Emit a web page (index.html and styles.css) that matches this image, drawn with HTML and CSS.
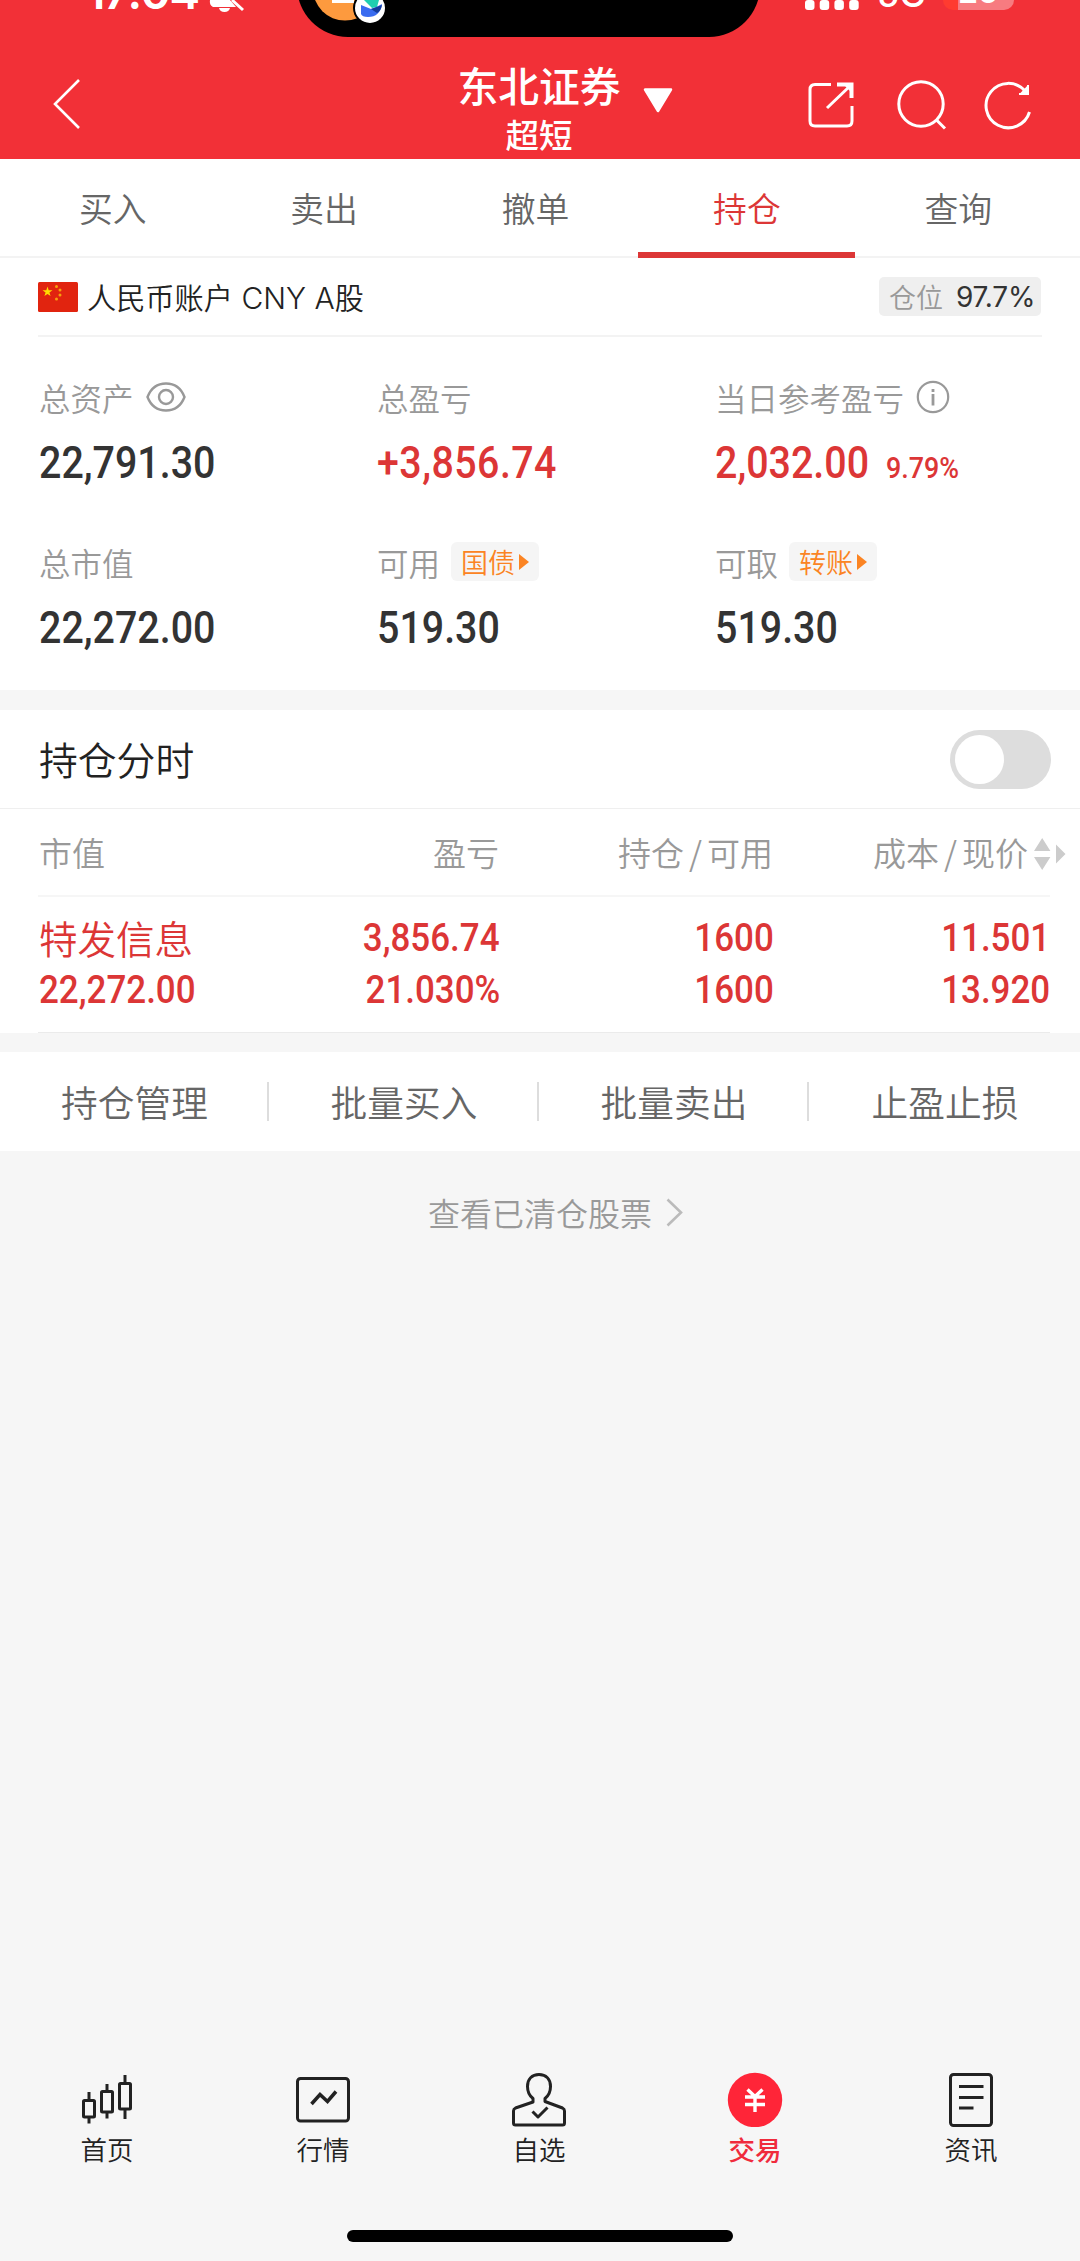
FILE: index.html
```html
<!DOCTYPE html>
<html lang="zh-CN">
<head>
<meta charset="utf-8">
<title>持仓</title>
<link rel="stylesheet" href="styles.css">
</head>
<body>
<div class="app">
  <header class="header">
    <div class="statusbar">
      <span class="clock">17:04</span>
      <svg class="bell" width="38" height="14" viewBox="0 0 38 14"><path d="M1 0H21L27 7H4Q0 5 1 0ZM10 8H21Q20 12 15.500 12T10 8Z" fill="#fff"/><path d="M23 0L34 10" stroke="#fff" stroke-width="3"/></svg>
      <div class="island"></div>
      <svg class="island-art" width="90" height="30" viewBox="0 0 90 30"><circle cx="40" cy="-11.400" r="32" fill="#fd9a3e"/><rect x="27" y="-6" width="22" height="9" fill="#fff"/><circle cx="65" cy="8" r="17" fill="#000"/><circle cx="65" cy="8" r="15" fill="#fff"/><path d="M59 0H74L72 7L67 8Z" fill="#1fcfb0"/><path d="M56 5L66 9Q72 7 77 4Q75 17 63 17Q57 17 56 14Z" fill="#3a6cf0"/><path d="M66 9Q72 7 77 5Q76 11 72 13Z" fill="#143c9c"/></svg>
      <svg class="signal" width="56" height="12" viewBox="0 0 56 12" fill="#fff"><rect y="0" width="9.500" height="10" rx="3"/><rect x="14.700" y="0" width="9.500" height="10" rx="3"/><rect x="29.400" y="0" width="9.500" height="10" rx="3"/><rect x="44.200" y="0" width="9.500" height="10" rx="3"/></svg>
      <span class="network">5G</span>
      <div class="battery"><span class="level">20</span></div>
    </div>
    <svg class="back" width="30" height="52" viewBox="0 0 30 52" fill="none" stroke="#fff" stroke-width="2.600"><path d="M27 2L3 26L27 50"/></svg>
    <div class="title"><span class="broker">东北证券</span><span class="alias">超短</span></div>
    <svg class="caret" width="30" height="25" viewBox="0 0 30 25"><path d="M2 1.500H28L15 23Z" fill="#fff" stroke="#fff" stroke-width="2.500" stroke-linejoin="round"/></svg>
    <div class="tools">
      <svg width="46" height="48" viewBox="0 0 46 48" fill="none" stroke="#fff" stroke-width="3"><path d="M23 3.500H7Q2 3.500 2 8.500V40Q2 45 7 45H39Q44 45 44 40V25M19 27L42 5"/><path d="M29 3.500H43.500V17" stroke-width="4"/><path d="M36 4H44V12Z" fill="#fff" stroke="none"/></svg>
      <svg width="50" height="50" viewBox="0 0 50 50" fill="none" stroke="#fff" stroke-width="3"><circle cx="24" cy="24" r="22.200"/><path d="M39.500 40L48 48.500"/></svg>
      <svg width="48" height="50" viewBox="0 0 48 50" fill="none" stroke="#fff" stroke-width="3"><path d="M41 11A22.200 22.200 0 1 0 45.500 32"/><path d="M44 5V14.500H35Z" fill="#fff" stroke="none"/><path d="M44 5V14H35" stroke-width="2"/></svg>
    </div>
  </header>

  <nav class="tabs">
    <span class="tab">买入</span><span class="tab">卖出</span><span class="tab">撤单</span><span class="tab current">持仓</span><span class="tab">查询</span>
  </nav>

  <section class="account">
    <div class="account-head">
      <svg class="flag" width="40" height="30" viewBox="0 0 40 30"><rect width="40" height="30" rx="1.500" fill="#e1240f"/><path d="M9.500 4.500L10.700 8.200H14.500L11.400 10.500L12.600 14.100L9.500 11.900L6.400 14.100L7.600 10.500L4.500 8.200H8.300Z" fill="#ffde00"/><g fill="#f7a10c"><circle cx="18.500" cy="4.500" r="1.500"/><circle cx="22" cy="8" r="1.500"/><circle cx="22" cy="13" r="1.500"/><circle cx="18.500" cy="17" r="1.500"/></g></svg>
      <span class="account-name">人民币账户 <span class="latin">CNY A</span>股</span>
      <span class="position">仓位<b>97.7%</b></span>
    </div>
    <div class="stats">
      <div class="stat">
        <div class="label">总资产<svg class="eye" width="40" height="30" viewBox="0 0 40 30" fill="none" stroke="#999" stroke-width="2.400"><path d="M1.500 15C5 6 12 1.500 20 1.500S35 6 38.500 15C35 24 28 28.500 20 28.500S5 24 1.500 15Z"/><circle cx="20" cy="15" r="7"/></svg></div>
        <div class="value"><span class="num">22,791.30</span></div>
      </div>
      <div class="stat">
        <div class="label">总盈亏</div>
        <div class="value up"><span class="num signed">+3,856.74</span></div>
      </div>
      <div class="stat">
        <div class="label">当日参考盈亏<svg class="info" width="34" height="34" viewBox="0 0 34 34" fill="none" stroke="#999" stroke-width="2.200"><circle cx="17" cy="17" r="15.200"/><path d="M17 14V25.500M17 9V12" stroke-width="2.800"/></svg></div>
        <div class="value up"><span class="num">2,032.00</span><span class="num rate">9.79%</span></div>
      </div>
      <div class="stat">
        <div class="label">总市值</div>
        <div class="value"><span class="num">22,272.00</span></div>
      </div>
      <div class="stat">
        <div class="label">可用<span class="chip">国债<i></i></span></div>
        <div class="value"><span class="num">519.30</span></div>
      </div>
      <div class="stat">
        <div class="label">可取<span class="chip">转账<i></i></span></div>
        <div class="value"><span class="num">519.30</span></div>
      </div>
    </div>
  </section>

  <section class="holdings">
    <div class="holdings-head"><h2>持仓分时</h2><span class="switch"></span></div>
    <div class="row columns">
      <span>市值</span><span>盈亏</span><span>持仓<em>/</em>可用</span>
      <span class="last">成本<em>/</em>现价</span>
      <svg class="sort" width="32" height="32" viewBox="0 0 32 32" fill="#ccc"><path d="M0 13L8.200 0L16.400 13ZM0 19L8.200 32L16.400 19ZM22 6.500L31.500 16L22 25.500Z"/></svg>
    </div>
    <div class="row position-row">
      <div><span class="stock">特发信息</span><span class="num">22,272.00</span></div>
      <div><span class="num">3,856.74</span><span class="num">21.030%</span></div>
      <div><span class="num">1600</span><span class="num">1600</span></div>
      <div><span class="num">11.501</span><span class="num">13.920</span></div>
    </div>
  </section>

  <section class="actions"><span>持仓管理</span><span>批量买入</span><span>批量卖出</span><span>止盈止损</span></section>

  <div class="cleared">查看已清仓股票<svg width="17" height="29" viewBox="0 0 17 29" fill="none" stroke="#bbb" stroke-width="2.600"><path d="M1.500 1.500L15 14.500L1.500 27.500"/></svg></div>

  <nav class="tabbar">
    <a class="item"><svg width="56" height="56" viewBox="0 0 56 56" fill="none" stroke="#222" stroke-width="3"><rect x="4.500" y="29.500" width="11" height="16.500" rx="1"/><path d="M10 21V29.500M10 46V52.500"/><rect x="22.500" y="20.500" width="11" height="20.500" rx="1"/><path d="M28 13V20.500M28 41V47.500"/><rect x="40.500" y="12.500" width="11" height="25.500" rx="1"/><path d="M46 4V12.500M46 38V48"/></svg>首页</a>
    <a class="item"><svg width="56" height="56" viewBox="0 0 56 56" fill="none" stroke="#222" stroke-width="3"><rect x="2.500" y="7.500" width="51" height="42.500" rx="3"/><path d="M16.500 33L25 23.500L32.500 30.500L41 20.500" stroke-width="3.500"/></svg>行情</a>
    <a class="item"><svg width="56" height="56" viewBox="0 0 56 56" fill="none" stroke="#222" stroke-width="3" stroke-linejoin="round"><path d="M22 31V27.500C17.500 24 16.500 20 16.500 15.500C16.500 8 21 3.500 28 3.500S39.500 8 39.500 15.500C39.500 20 38.500 24 34 27.500V30.500L51.500 37Q53.500 38 53.500 40V52Q53.500 54 51.500 54H4.500Q2.500 54 2.500 52V40Q2.500 38 4.500 37Z"/><path d="M21.500 40.500L27 46L36.500 36.500" stroke-width="3"/></svg>自选</a>
    <a class="item active"><svg width="56" height="56" viewBox="0 0 56 56"><circle cx="28" cy="29" r="27.200" fill="#ff2538"/><path d="M20.500 18.500L28 25.500L35.500 18.500M18 26H38M18 33.500H38M28 25V41" fill="none" stroke="#fff" stroke-width="3.400"/></svg>交易</a>
    <a class="item"><svg width="56" height="56" viewBox="0 0 56 56" fill="none" stroke="#222" stroke-width="3"><rect x="7.500" y="3.500" width="41" height="51" rx="3"/><path d="M16 15.500H40.500M16 26.500H40.500M16 37H30.500"/></svg>资讯</a>
  </nav>
  <div class="home-indicator"></div>
</div>
</body>
</html>
```
FILE: styles.css
```css
* { box-sizing: border-box; }

body {
  margin: 0;
  background: #f6f6f6;
  color: #222;
  font-family: "Noto Sans CJK SC", sans-serif;
  font-weight: 350;
}

svg { display: block; flex: none; }

.app {
  width: 1080px;
  height: 2261px;
  display: flex;
  flex-direction: column;
  overflow: hidden;
}

/* Header */
.header {
  position: relative;
  flex: none;
  height: 159px;
  padding: 62px 48px 0 52px;
  display: flex;
  justify-content: space-between;
  background: #f23037;
  color: #fff;
  overflow: hidden;
}

.statusbar {
  position: absolute;
  inset: 0 0 auto 0;
  height: 40px;
  font: 600 46px/46px Inter, sans-serif;
}

.statusbar > * { position: absolute; top: 0; }
.clock { left: 86px; top: -31px; letter-spacing: -1.500px; }
.bell { left: 209px; }
.island { left: 297px; top: -65px; width: 463px; height: 102px; border-radius: 51px; background: #000; }
.island-art { left: 305px; }
.signal { left: 805px; }
.network { left: 877px; top: -26px; font-weight: 500; font-size: 36px; line-height: 40px; }

.statusbar .battery {
  left: 943px;
  top: -22px;
  width: 71px;
  height: 32px;
  border-radius: 10px;
  background: linear-gradient(90deg, #ff3b30 15px, #f77b80 15px);
}

.level { display: block; margin-top: -4px; text-align: center; font-size: 31px; line-height: 36px; font-weight: 700; }

.back { margin-top: 16px; }

.title {
  position: absolute;
  left: 0;
  right: 2px;
  top: 58px;
  display: flex;
  flex-direction: column;
  align-items: center;
  font-weight: 500;
}

.broker { font-size: 40.800px; line-height: 54px; }
.alias { font-size: 33.500px; line-height: 44px; }
.caret { position: absolute; left: 643px; top: 88px; }
.tools { display: flex; align-items: center; gap: 40px; height: 86px; }
.tools svg:nth-child(2) { margin-left: 3px; }
.tools svg:nth-child(3) { margin-left: -3px; }

/* Order tabs */
.tabs {
  flex: none;
  height: 99px;
  padding: 0 16px 0 7px;
  display: grid;
  grid-template-columns: repeat(5, 1fr);
  border-bottom: 2px solid #f3f3f3;
  background: #fff;
  color: #666;
  font-size: 33.800px;
}

.tab { position: relative; text-align: center; line-height: 97px; }
.current { color: #dc3636; }

.current::after {
  content: "";
  position: absolute;
  left: -3px;
  right: -2px;
  bottom: -2px;
  height: 6px;
  background: #dc3636;
}

/* Account summary */
.account { flex: none; height: 432px; padding: 0 38px; background: #fff; }

.account-head {
  height: 79px;
  display: flex;
  align-items: center;
  border-bottom: 2px solid #f3f3f3;
}

.account-name { margin-left: 9px; font-size: 29.200px; line-height: 44px; }
.latin { margin-left: 2px; font-family: Inter, sans-serif; font-weight: 350; font-size: 30px; }

.position {
  margin-left: auto;
  width: 162px;
  height: 39px;
  margin-right: 1px;
  padding-left: 10px;
  display: flex;
  align-items: center;
  border-radius: 5px;
  background: #efefef;
  color: #999;
  font-size: 27px;
}

.position b { margin-left: 13px; color: #333; font: 400 28px/36px Inter, sans-serif; letter-spacing: -.2px; }

.stats { display: grid; grid-template-columns: repeat(3, 338px); grid-auto-rows: 164.500px; padding: 36px 0 0 1px; }
.label { display: flex; align-items: center; height: 48px; color: #999; font-size: 31.500px; }
.eye { margin-left: 12px; }
.info { margin-left: 12px; }

.value { display: flex; align-items: baseline; height: 60px; margin-top: 12px; color: #333; font-size: 44px; line-height: 60px; }
.up, .position-row { color: #dc3636; }

/* Condensed figures, narrowed toward their anchored edge */
.num {
  display: inline-block;
  font-family: Roboto, sans-serif;
  font-weight: 500;
  transform: scaleX(.895);
  transform-origin: left;
}

.signed { letter-spacing: .5px; }
.rate { margin-left: -1px; font-size: 30px; font-weight: 500; }

.chip {
  display: flex;
  align-items: center;
  width: 88px;
  height: 39px;
  margin-left: 11px;
  padding-left: 10px;
  border-radius: 6px;
  background: #f5f5f5;
  color: #fb8423;
  font-size: 27px;
}

.chip i { margin-left: 4px; border: 8px solid transparent; border-left: 10px solid #fb8423; border-right: 0; }

/* Holdings */
.holdings { flex: none; height: 323px; margin-top: 20px; background: #fff; }

.holdings-head {
  display: flex;
  justify-content: space-between;
  align-items: center;
  height: 99px;
  padding: 0 29px 0 39px;
  border-bottom: 1px solid #efefef;
}

h2 { margin: -3px 0 0; font-size: 38.800px; font-weight: 350; }

.switch { width: 101px; height: 59px; padding: 5px; border-radius: 30px; background: #ddd; }
.switch::before { content: ""; display: block; width: 49px; height: 49px; border-radius: 50%; background: #fff; }

.row {
  position: relative;
  display: grid;
  grid-template-columns: 200px 262px 274px 276px;
  margin: 0 30px 0 38px;
}

.row > * + * { text-align: right; }

.columns { height: 88px; align-items: center; border-bottom: 2px solid #f6f6f6; color: #999; font-size: 33px; line-height: 48px; }
.columns span { padding: 0 1px; }
.columns .last { padding-right: 22px; }
.columns em { margin: 0 5px; font-style: normal; }
.sort { position: absolute; left: 996px; top: 29px; }

.position-row { height: 136px; padding-top: 15px; border-bottom: 1px solid #ebebeb; }
.position-row > div { display: flex; flex-direction: column; align-items: flex-end; }
.position-row > div:first-child { align-items: flex-start; padding-left: 1px; }
.position-row .num, .stock { font-size: 39.500px; line-height: 51.500px; transform-origin: right; }
.position-row .num { transform: scaleX(.885); }
.position-row > div:first-child .num { transform-origin: left; }
.position-row .stock { font-size: 38.500px; }

/* Actions */
.actions {
  flex: none;
  height: 99px;
  margin-top: 19px;
  display: grid;
  grid-template-columns: 269px repeat(3, 270px);
  align-items: center;
  background: #fff;
  color: #666;
  font-size: 36.700px;
  text-align: center;
}

.actions span { line-height: 39px; padding-left: 2px; border-right: 2px solid #ddd; }
.actions span:last-child { border-right: 0; }

.cleared { display: flex; justify-content: center; align-items: center; gap: 14px; margin: 37px 0 0 31px; color: #999; font-size: 32px; line-height: 48px; }

/* Bottom navigation */
.tabbar { display: grid; grid-template-columns: repeat(5, 216px); margin: auto 0 0 -1px; }
.item { display: flex; flex-direction: column; align-items: center; gap: 3px; color: #222; font-size: 26.500px; line-height: 38px; }
.active { color: #f02b3c; font-weight: 500; }
.home-indicator { flex: none; width: 386px; height: 12px; margin: 62px 0 19px 347px; border-radius: 6px; background: #000; }
```
